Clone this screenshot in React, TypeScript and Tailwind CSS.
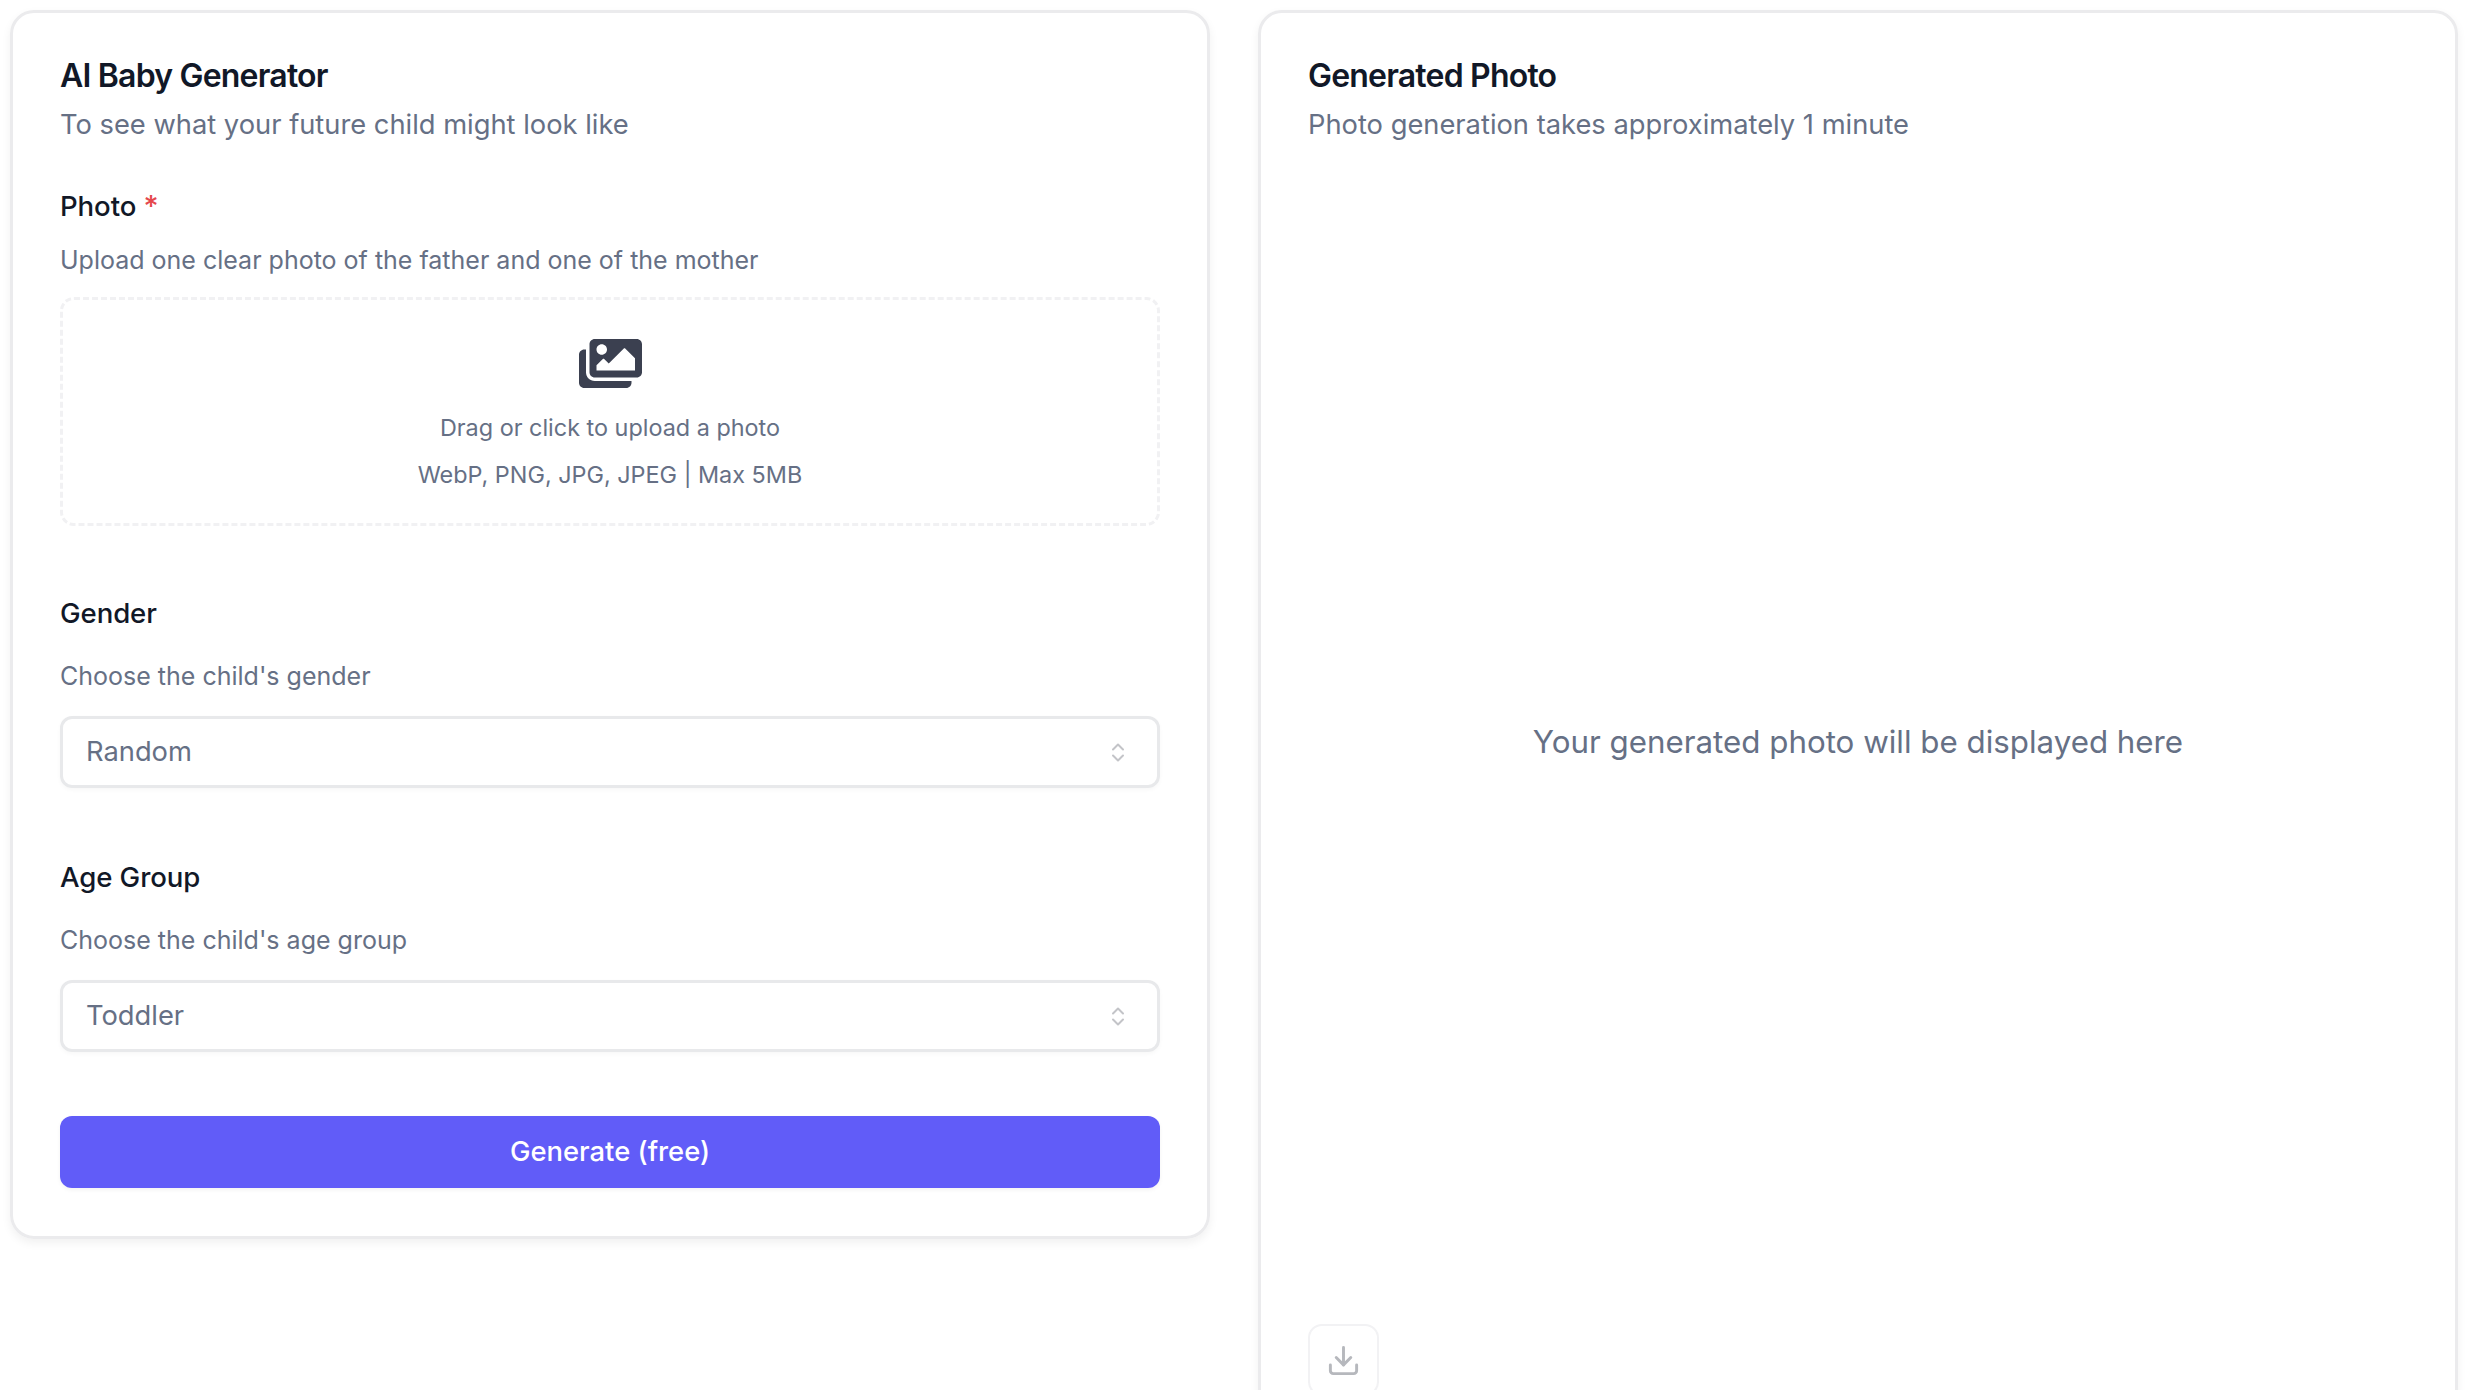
import React from 'react';
import { Download } from 'lucide-react';
import { FaImages } from 'react-icons/fa';

const UpDown = () => (
  <svg width="14" height="21" viewBox="0 0 14 21" fill="none" stroke="#c3c4c8" strokeWidth="2" strokeLinecap="round" strokeLinejoin="round">
    <path d="M2 7.5 7 2.5 12 7.5" />
    <path d="M2 13.5 7 18.5 12 13.5" />
  </svg>
);

const SelectBox = ({ value }: { value: string }) => (
  <div className="mt-[21px] flex h-[72px] items-center justify-between rounded-[12px] border-[3px] border-[#e8e9eb] pl-[23px] pr-[32px] text-[27.3px] text-[#667085] shadow-[0_2px_4px_rgba(0,0,0,0.03)]">
    <span>{value}</span>
    <UpDown />
  </div>
);

const App = () => {
  return (
    <div className="h-[1390px] overflow-hidden bg-white font-['Inter',sans-serif]">
      <div className="grid grid-cols-2 items-start gap-[48px] pl-[10px] pr-[8px] pt-[10px]">
        {/* Form card */}
        <div className="rounded-[24px] border-[3px] border-[#ebebed] px-[47px] pb-[48px] pt-[43px] shadow-[0_4px_10px_rgba(0,0,0,0.06)]">
          <h1 className="text-[32px] font-semibold leading-[40px] tracking-[-0.8px] text-[#111827]">AI Baby Generator</h1>
          <p className="mt-[10px] text-[27.3px] leading-[38px] text-[#667085]">To see what your future child might look like</p>

          <div className="mt-[43px] text-[27.6px] font-medium leading-[38px] tracking-[-0.1px] text-[#111827]">
            Photo <span className="text-[29px] text-[#e5484d]">*</span>
          </div>
          <p className="mt-[16px] text-[25px] leading-[38px] text-[#667085]">Upload one clear photo of the father and one of the mother</p>

          <div className="mt-[18px] flex h-[229px] flex-col items-center rounded-[14px] border-[3px] border-dashed border-[#f1f1f3] pt-[32px]">
            <FaImages size={63} color="#3b4050" />
            <p className="mt-[16px] text-[23.4px] leading-[34px] text-[#667085]">Drag or click to upload a photo</p>
            <p className="mt-[13px] text-[23.4px] leading-[34px] text-[#667085]">WebP, PNG, JPG, JPEG | Max 5MB</p>
          </div>

          <div className="mt-[68px] text-[27.6px] font-medium leading-[38px] tracking-[-0.1px] text-[#111827]">Gender</div>
          <p className="mt-[25px] text-[25px] leading-[38px] text-[#667085]">Choose the child's gender</p>
          <SelectBox value="Random" />

          <div className="mt-[70px] text-[27.6px] font-medium leading-[38px] tracking-[-0.1px] text-[#111827]">Age Group</div>
          <p className="mt-[25px] text-[25px] leading-[38px] text-[#667085]">Choose the child's age group</p>
          <SelectBox value="Toddler" />

          <button className="mt-[64px] flex h-[72px] w-full items-center justify-center rounded-[12px] bg-[#615cf8] text-[27.4px] font-medium text-white shadow-[0_2px_4px_rgba(0,0,0,0.05)]">
            Generate (free)
          </button>
        </div>

        {/* Result card */}
        <div className="rounded-[24px] border-[3px] border-[#ebebed] px-[47px] pb-[46px] pt-[43px] shadow-[0_4px_10px_rgba(0,0,0,0.06)]">
          <h2 className="text-[32px] font-semibold leading-[40px] tracking-[-0.8px] text-[#111827]">Generated Photo</h2>
          <p className="mt-[10px] text-[27.3px] leading-[38px] text-[#667085]">Photo generation takes approximately 1 minute</p>
          <div className="mt-[17px] flex h-[1163px] items-center justify-center text-[31.3px] text-[#667085]">
            Your generated photo will be displayed here
          </div>
          <button className="flex h-[72px] w-[71px] items-center justify-center rounded-[14px] border-[2px] border-[#f2f2f4]">
            <Download size={35} color="#b6b8bd" strokeWidth={2} />
          </button>
        </div>
      </div>
    </div>
  );
};

export default App;
